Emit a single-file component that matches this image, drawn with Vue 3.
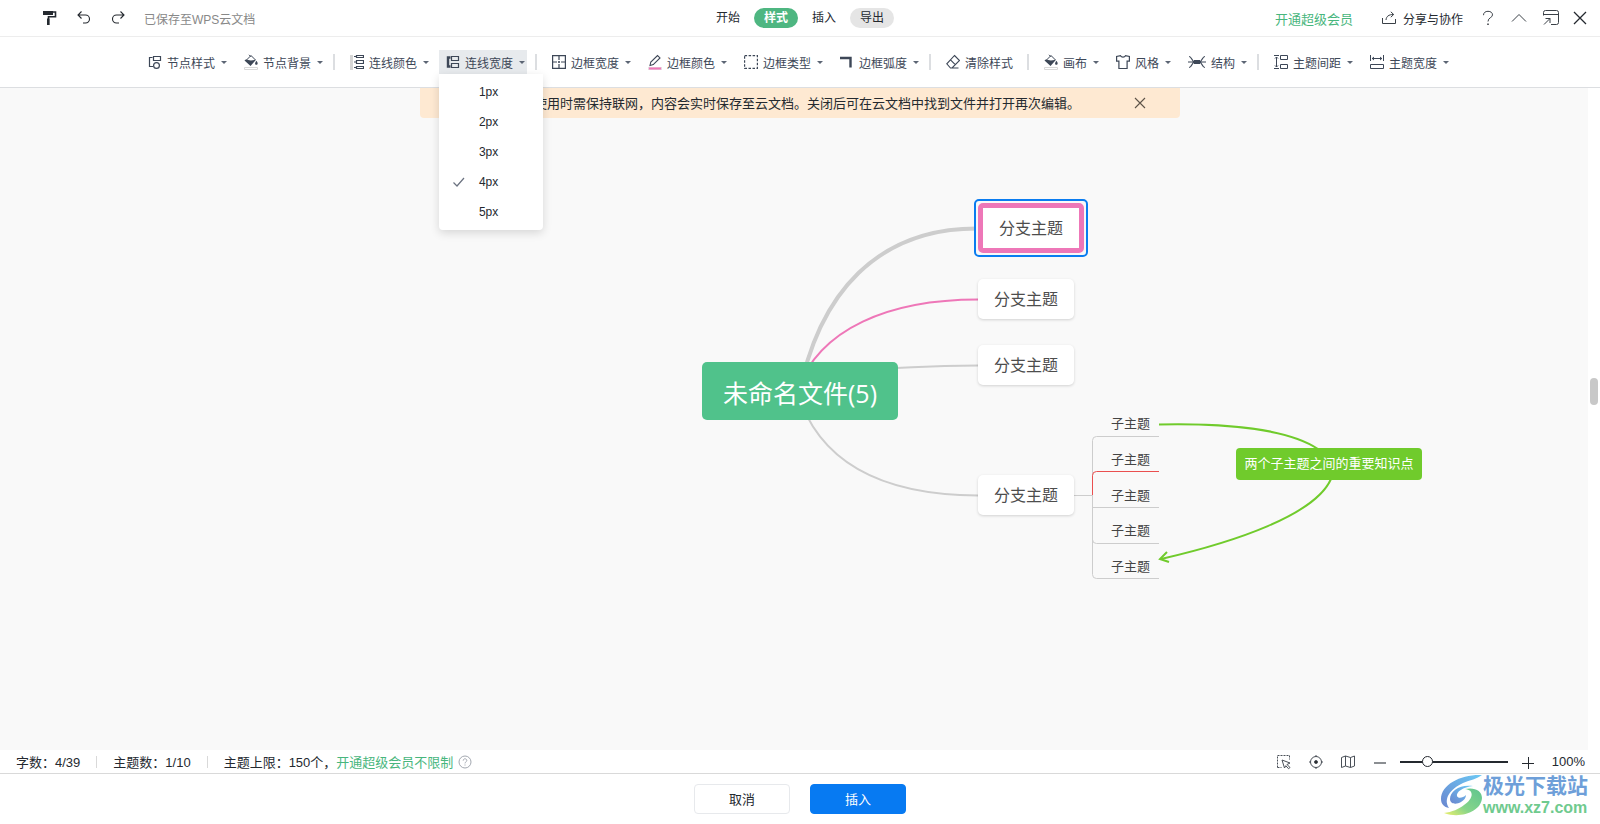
<script setup>
import { ref } from 'vue'

const tabs = [
  { label: '开始', kind: '' },
  { label: '样式', kind: 'active' },
  { label: '插入', kind: '' },
  { label: '导出', kind: 'muted' },
]

const tools = [
  { label: '节点样式', icon: 'nodeStyle', caret: true },
  { label: '节点背景', icon: 'bucket', caret: true },
  { sep: true },
  { label: '连线颜色', icon: 'lineColor', caret: true },
  { label: '连线宽度', icon: 'lineWidth', caret: true, open: true },
  { sep: true },
  { label: '边框宽度', icon: 'borderWidth', caret: true },
  { label: '边框颜色', icon: 'pen', caret: true },
  { label: '边框类型', icon: 'dashed', caret: true },
  { label: '边框弧度', icon: 'corner', caret: true },
  { sep: true },
  { label: '清除样式', icon: 'eraser' },
  { sep: true },
  { label: '画布', icon: 'bucket', caret: true },
  { label: '风格', icon: 'shirt', caret: true },
  { label: '结构', icon: 'structure', caret: true, wide: true },
  { sep: true },
  { label: '主题间距', icon: 'spacing', caret: true },
  { label: '主题宽度', icon: 'topicWidth', caret: true },
]

const widths = ['1px', '2px', '3px', '4px', '5px']
const chosen = ref('4px')
const zoomLevel = ref(23)

const branches = [
  { x: 828, y: 191 },
  { x: 828, y: 257 },
  { x: 828, y: 387 },
]
const leaves = [324, 360, 396, 431, 467]
</script>

<template>
  <div class="app">
    <header class="topbar">
      <div class="top-left">
        <button class="icon-btn" aria-label="格式刷">
          <svg width="16" height="16" viewBox="0 0 16 16"><path d="M1 1h10v4H1z" fill="#24292f" /><path d="M11 2h2.5v4.8H6.5V15" fill="none" stroke="#24292f" stroke-width="1.6" /><path d="M5 8.500h2.500V15H5z" fill="#24292f" /></svg>
        </button>
        <button class="icon-btn" aria-label="撤销">
          <svg width="16" height="16" viewBox="0 0 16 16" class="ln"><path d="M5.500 1.500 2 5l3.500 3.500M2 5h7.500a4 4 0 0 1 0 8H7" /></svg>
        </button>
        <button class="icon-btn" aria-label="重做">
          <svg width="16" height="16" viewBox="0 0 16 16" class="ln"><path d="M10.500 1.500 14 5l-3.500 3.500M14 5H6.500a4 4 0 0 0 0 8H9" /></svg>
        </button>
        <span class="saved">已保存至WPS云文档</span>
      </div>
      <nav class="tabs">
        <button v-for="t in tabs" :key="t.label" class="tab" :class="t.kind">{{ t.label }}</button>
      </nav>
      <div class="top-right">
        <a href="#" class="vip">开通超级会员</a>
        <button class="share">
          <svg width="16" height="16" viewBox="0 0 16 16" class="ln thin"><path d="M1.500 8v5.500h13V9M5 10c.3-3.500 2.500-5.500 7.500-5.500M9.800 1.800l2.900 2.700-2.900 2.700" /></svg>
          <span>分享与协作</span>
        </button>
        <button class="icon-btn" aria-label="帮助">
          <svg width="16" height="16" viewBox="0 0 16 16" class="ln thin"><path d="M3.500 5.200C3.500 2.700 5.300 1.300 8 1.300s4.500 1.400 4.500 3.600C12.500 7.800 8 7.500 8 11.500" /><path d="M7.300 13.500h1.400V15H7.300z" fill="#24292f" stroke="none" /></svg>
        </button>
        <button class="icon-btn" aria-label="收起">
          <svg width="16" height="16" viewBox="0 0 16 16" class="ln thin"><path d="M1 11.500 8 4.500l7 7" /></svg>
        </button>
        <button class="icon-btn" aria-label="窗口">
          <svg width="18" height="18" viewBox="0 0 18 18" class="ln thin"><path d="M1.500 6.500v-3a2 2 0 0 1 2-2h11a2 2 0 0 1 2 2v10a2 2 0 0 1-2 2H9M1.500 5.500h15M2 15.500l6-6M3.500 9.500H8V14" /></svg>
        </button>
        <button class="icon-btn close" aria-label="关闭">
          <svg width="16" height="16" viewBox="0 0 16 16" class="ln"><path d="m2 2 12 12M14 2 2 14" stroke-width="1.300" /></svg>
        </button>
      </div>
    </header>

    <div class="toolbar" role="toolbar">
      <template v-for="(t, i) in tools" :key="i">
        <i v-if="t.sep" class="sep"></i>
        <div v-else class="tool-wrap">
          <button class="tool" :class="{ open: t.open, plain: !t.caret }">
            <svg class="tool-icon" height="16" :width="t.wide ? 18 : 14" :viewBox="t.wide ? '0 0 18 16' : '0 0 14 16'">
              <g v-if="t.icon === 'nodeStyle'"><path d="M5.500 2.500h7v4h-7zM4.500 3.500H1.500v9h3.500" /><circle cx="8.500" cy="11.500" r="2.900" /></g>
              <g v-else-if="t.icon === 'bucket'"><path d="M2.500 6 7 1.500 11.500 6M5 .8l2 2" stroke-width="1" /><path d="M.5 6.500C2 4.500 4 6.500 7 6.500l5-.8L6.500 12z" fill="#3d4757" stroke="none" /><path d="M12.300 6.800c2.200 2.700 1.400 4 0 4s-1.800-1.300 0-4z" fill="#3d4757" stroke="none" /><path d="M.5 13.500h13v2H.5z" stroke="#d8d8d8" fill="#fff" stroke-width="1" /></g>
              <g v-else-if="t.icon === 'lineColor'"><path d="M0 1h3v15H0z" fill="#d6d6d6" stroke="none" /><path d="M6.500 1.500h7v2h-7zM6.500 6.500h7v3h-7zM6.500 12.500h7v2h-7zM4 2.500h2M4 8h2M4 13.500h2" /></g>
              <g v-else-if="t.icon === 'lineWidth'"><path d="M4.500 3.500H2v9h2.500" stroke-width="2.400" /><path d="M5.500 2.500h7v4h-7zM5.500 9.500h7v4h-7z" /></g>
              <g v-else-if="t.icon === 'borderWidth'"><path d="M.6 1.600h12.800v12.800H.6z" /><path d="M7 2v4M7 10v4M1 8h4M9 8h4M7 7v2M6 8h2" /></g>
              <g v-else-if="t.icon === 'pen'"><path d="M2 11.500 2.800 8 9.500 1.500l2.500 2.400-6.700 6.700z" stroke-width="1.100" /><path d="M0 13h14v3H0z" fill="#e6dbe1" stroke="none" /><path d="M1 13.500h12v2H1z" fill="#ef77b8" stroke="none" /></g>
              <g v-else-if="t.icon === 'dashed'"><path d="M.6 1.600h12.800v12.800H.6z" stroke-dasharray="2.500 1.500" /></g>
              <g v-else-if="t.icon === 'corner'"><path d="M0 4h10.500v9.500" stroke-width="2.400" /></g>
              <g v-else-if="t.icon === 'eraser'"><path d="m8.500 1.500 5 5-7.500 7.500H4.500L.8 9.800zM4.500 5.800l5 5M6 14h6.500" stroke-width="1.100" /></g>
              <g v-else-if="t.icon === 'shirt'"><path d="M4.500 1.700c1 1.800 4 1.800 5 0l3.900.8v4.700h-2.300v7.300H2.900V7.200H.6V2.500z" /></g>
              <g v-else-if="t.icon === 'structure'"><path d="M1 2.500c3 0 2.500 5.500 6 5.500M1 13.500C4 13.500 3.500 8 7 8M17 2.500c-3 0-2.500 5.500-6 5.500M17 13.500c-3 0-2.500-5.500-6-5.500M0 8h18" /><path d="M6 6h6v4H6z" fill="#3d4757" stroke="none" /></g>
              <g v-else-if="t.icon === 'spacing'"><path d="M6.500 1.500h7v4h-7zM6.500 10.500h7v4h-7zM0 1.500h5M0 14.500h5M2.500 3v10M1 4.500l1.500-1.500L4 4.500M1 11.500 2.500 13 4 11.500" stroke-width="1" /></g>
              <g v-else><path d="M.5 10.500h13v4H.5zM.5 1v6M13.500 1v6M2 4.500h10M4 3 2.200 4.500 4 6M10 3l1.800 1.500L10 6" stroke-width="1" /></g>
            </svg>
            <span>{{ t.label }}</span>
            <i v-if="t.caret" class="caret"></i>
          </button>
          <ul v-if="t.open" class="menu">
            <li v-for="w in widths" :key="w">
              <button class="menu-item" @click="chosen = w">
                <svg width="14" height="12" viewBox="0 0 14 12"><path v-if="w === chosen" d="m1.500 6.500 3.500 3.500 7-8" fill="none" stroke="#6b7280" stroke-width="1.200" /></svg>
                <span>{{ w }}</span>
              </button>
            </li>
          </ul>
        </div>
      </template>
    </div>

    <main class="canvas">
      <div class="notice">
        <span>使用时需保持联网，内容会实时保存至云文档。关闭后可在云文档中找到文件并打开再次编辑。</span>
        <button class="icon-btn" aria-label="关闭提示">
          <svg width="12" height="12" viewBox="0 0 12 12"><path d="m1 1 10 10M11 1 1 11" fill="none" stroke="#5d5348" stroke-width="1.100" /></svg>
        </button>
      </div>

      <div class="stage">
        <svg class="links" width="1300" height="662" viewBox="150 88 1300 662" fill="none">
          <path d="M798 400C818 290 880 228 978 228.500" stroke="#cdcdcd" stroke-width="4" />
          <path d="M797 391C819 328 890 299.500 978 299.500" stroke="#ee77b8" stroke-width="2" />
          <path d="M850 371Q910 366 978 365.500" stroke="#cdcdcd" stroke-width="2" />
          <path d="M797 391C817 458 876 495 978 495.500" stroke="#cdcdcd" stroke-width="2" />
          <g stroke="#cdcdcd">
            <path d="M1074 495.500h18.500" />
            <path d="M1159 436.500h-62.500a4 4 0 0 0-4 4V574.500a4 4 0 0 0 4 4H1159" />
            <path d="M1092.500 507.500H1159M1092.500 539.500a4 4 0 0 0 4 4H1159" />
          </g>
          <path d="M1092.500 495v-19.500a4 4 0 0 1 4-4H1159" stroke="#ea4f4f" />
          <g stroke="#70cb2c" stroke-width="2">
            <path d="M1159 424.500C1230 423 1290 430 1318 449" />
            <path d="M1331 479C1315 515 1235 542 1161 559" />
            <path d="m1167 552-7 7 9 3" />
          </g>
        </svg>
        <div class="root-node">未命名文件(5)</div>
        <div class="picked"><div class="picked-inner">分支主题</div></div>
        <div v-for="b in branches" :key="b.y" class="branch" :style="{ left: b.x + 'px', top: b.y + 'px' }">分支主题</div>
        <div v-for="y in leaves" :key="y" class="leaf" :style="{ top: y + 'px' }">子主题</div>
        <div class="relation">两个子主题之间的重要知识点</div>
      </div>
      <div class="scroll-lane"><i class="thumb"></i></div>
    </main>

    <div class="status">
      <div class="counts">
        <span class="count">字数：4/39</span>
        <span class="count">主题数：1/10</span>
        <span class="count">主题上限：150个，<a href="#">开通超级会员不限制</a></span>
        <svg width="14" height="14" viewBox="0 0 14 14" fill="none" stroke="#a3a8b0"><circle cx="7" cy="7" r="6" /><path d="M5.200 5.600c0-2.400 3.600-2.400 3.600-.1 0 1.400-1.800 1.300-1.800 2.900M7 9.500v1" /></svg>
      </div>
      <div class="view-tools">
        <button class="icon-btn" aria-label="框选">
          <svg width="16" height="16" viewBox="0 0 16 16" fill="none" stroke="#4a5058"><path d="M1.500 13.500v-12h12v4M1.500 13.500h4" stroke-dasharray="2 1" /><path d="m6 6 8 3-3 1.500 3 3-1.500 1.200-2.700-3L8.500 14z" /></svg>
        </button>
        <button class="icon-btn" aria-label="定位">
          <svg width="16" height="16" viewBox="0 0 16 16" fill="none" stroke="#4a5058"><circle cx="8" cy="8" r="5.500" /><circle cx="8" cy="8" r="1.500" fill="#222" /><path d="M8 1v2M8 13v2M1 8h2M13 8h2" /></svg>
        </button>
        <button class="icon-btn" aria-label="导航">
          <svg width="16" height="16" viewBox="0 0 16 16" fill="none" stroke="#4a5058"><path d="M1.500 3.500 5.500 2v10l-4 1.500zM5.500 2l5 1.500v10l-5-1.500M10.500 3.500l4-1.500v10l-4 1.500" /></svg>
        </button>
        <button class="icon-btn" aria-label="缩小">
          <svg width="16" height="16" viewBox="0 0 16 16"><path d="M2 9h12" stroke="#8b8e92" stroke-width="2" /></svg>
        </button>
        <input v-model="zoomLevel" class="zoom" type="range" min="0" max="100" aria-label="缩放" />
        <button class="icon-btn" aria-label="放大">
          <svg width="16" height="16" viewBox="0 0 16 16"><path d="M2 9.500h12M8.500 3v12" stroke="#24292f" stroke-width="1" /></svg>
        </button>
        <span class="percent">100%</span>
      </div>
    </div>

    <footer class="footer">
      <button class="btn">取消</button>
      <button class="btn primary">插入</button>
      <div class="brand">
        <svg width="42" height="42" viewBox="0 0 42 42">
          <defs>
            <linearGradient id="blue" x1="0" y1="1" x2="1" y2="0"><stop offset="0" stop-color="#6a86cf" /><stop offset="1" stop-color="#6cc9f5" /></linearGradient>
            <linearGradient id="green" x1="0" y1="1" x2="1" y2="0"><stop offset="0" stop-color="#eef06a" /><stop offset=".4" stop-color="#86d58a" /><stop offset="1" stop-color="#5fc48f" /></linearGradient>
          </defs>
          <path d="M42 1C22 0 1 10 1 25c0 5 3 8 8 9C3 25 10 15 23 9c7-3 14-4 19-8z" fill="url(#blue)" />
          <path d="M33 12C20 10 10 17 10 25c0 5 6 6 11 3 3-2 5-4 5-7-3 3-8 4-9 1-1-4 6-9 16-10z" fill="url(#blue)" />
          <path d="M25 15c10 1 8 10-1 16-5 4-12 7-20 8 16 6 37-1 38-15 0-7-7-11-17-9z" fill="url(#green)" />
        </svg>
        <div class="brand-text">
          <span class="brand-name">极光下载站</span>
          <span class="brand-url">www.xz7.com</span>
        </div>
      </div>
    </footer>
  </div>
</template>

<style>
body {
  margin: 0;
}
</style>

<style scoped>
.app {
  display: flex;
  flex-direction: column;
  height: 100vh;
  overflow: hidden;
  background: #fff;
  color: #24292f;
  font-family: "Liberation Sans", "Noto Sans CJK SC", sans-serif;
  font-size: 12px;
}
button {
  margin: 0;
  padding: 0;
  border: 0;
  background: none;
  color: inherit;
  font: inherit;
  white-space: nowrap;
}
a {
  color: #48b67d;
  text-decoration: none;
}
svg {
  display: block;
  flex: none;
}
.ln {
  fill: none;
  stroke: #24292f;
  stroke-width: 1.1;
}
.ln.thin {
  stroke: #3a4047;
  stroke-width: 1;
}
.icon-btn {
  display: flex;
  align-items: center;
  justify-content: center;
}
.topbar {
  display: grid;
  grid-template-columns: 1fr auto 1fr;
  align-items: center;
  height: 36px;
  border-bottom: 1px solid #ededed;
}
.top-left {
  display: flex;
  align-items: center;
  gap: 18px;
  padding-left: 42px;
}
.saved {
  color: #888;
}
.tabs {
  display: flex;
  gap: 4px;
}
.tab {
  width: 44px;
  height: 20px;
  border-radius: 10px;
  line-height: 20px;
}
.tab.active {
  background: #4eb681;
  color: #fff;
  font-weight: bold;
}
.tab.muted {
  background: #e5e5e5;
}
.top-right {
  display: flex;
  align-items: center;
  justify-content: flex-end;
  gap: 15px;
  padding-right: 12px;
}
.close {
  margin-left: -3px;
}
.vip {
  margin-right: 13px;
  font-size: 13px;
}
.share {
  display: flex;
  align-items: center;
  gap: 6px;
  margin-right: 2px;
}
.toolbar {
  position: relative;
  z-index: 2;
  display: flex;
  align-items: center;
  justify-content: center;
  height: 50px;
  padding-right: 8px;
  border-bottom: 1px solid #dcdee1;
  color: #3d4757;
}
.tool-wrap {
  position: relative;
  margin: 0 4px;
}
.tool {
  display: flex;
  align-items: center;
  height: 24px;
  padding: 0 2px 0 7px;
}
.tool.plain {
  padding: 0 6px 0 7px;
}
.tool.open {
  background: #e7eaed;
}
.tool-icon {
  margin-right: 5px;
  fill: none;
  stroke: #3d4757;
  stroke-width: 1.2;
}
.sep {
  width: 2px;
  height: 16px;
  margin: 0 4px;
  background: #dcdee1;
}
.caret {
  margin-left: 6px;
  border: 3px solid transparent;
  border-top-color: #5c6574;
  border-bottom-width: 0;
}
.menu {
  position: absolute;
  top: 24px;
  left: 0;
  width: 104px;
  margin: 0;
  padding: 3px 0;
  border-radius: 0 0 4px 4px;
  background: #fff;
  box-shadow: 0 3px 10px rgba(0, 0, 0, 0.14);
  list-style: none;
  color: #24292f;
}
.menu-item {
  display: flex;
  align-items: center;
  gap: 13px;
  width: 100%;
  height: 30px;
  padding-left: 13px;
}
.canvas {
  position: relative;
  display: flex;
  flex: 1;
  justify-content: center;
  min-height: 0;
  overflow: hidden;
  background: #f9f9f9;
}
.notice {
  position: absolute;
  z-index: 1;
  top: 0;
  display: flex;
  align-items: center;
  justify-content: flex-end;
  gap: 54px;
  width: 760px;
  height: 30px;
  box-sizing: border-box;
  padding-right: 34px;
  border-radius: 0 0 4px 4px;
  background: #fee9d2;
  font-size: 13px;
}
.notice span {
  padding-bottom: 2px;
}
.stage {
  position: relative;
  flex: none;
  width: 1300px;
  height: 662px;
}
.root-node,
.picked,
.branch,
.leaf,
.relation {
  position: absolute;
  display: flex;
  align-items: center;
  justify-content: center;
  box-sizing: border-box;
  white-space: nowrap;
}
.root-node {
  left: 552px;
  top: 274px;
  width: 196px;
  height: 58px;
  padding-top: 2px;
  border-radius: 5px;
  background: #50c28b;
  color: #fff;
  font-family: "Open Sans", "Noto Sans CJK SC", sans-serif;
  font-size: 25px;
}
.picked {
  left: 824px;
  top: 111px;
  width: 114px;
  height: 58px;
  border: 2px solid #0a7cf0;
  border-radius: 5px;
  background: #f9f9f9;
}
.picked-inner {
  display: flex;
  align-items: center;
  justify-content: center;
  box-sizing: border-box;
  width: 106px;
  height: 50px;
  padding-bottom: 2px;
  border: 5px solid #ee77b8;
  border-radius: 5px;
  background: #fff;
  color: #4d4d4d;
  font-size: 16px;
}
.branch {
  width: 96px;
  height: 40px;
  padding-bottom: 2px;
  border-radius: 5px;
  background: #fff;
  box-shadow: 0 1px 3px rgba(0, 0, 0, 0.16);
  color: #4d4d4d;
  font-size: 16px;
}
.leaf {
  left: 961px;
  height: 24px;
  padding-bottom: 4px;
  color: #444;
  font-size: 13px;
}
.relation {
  left: 1086px;
  top: 360px;
  width: 186px;
  height: 32px;
  padding-bottom: 4px;
  border-radius: 4px;
  background: #70cb2c;
  color: #fff;
  font-size: 13px;
}
.scroll-lane {
  position: absolute;
  top: 0;
  right: 0;
  bottom: 0;
  display: flex;
  justify-content: center;
  width: 12px;
  background: #fff;
}
.thumb {
  width: 8px;
  height: 27px;
  margin-top: 290px;
  border-radius: 4px;
  background: #c8c8c8;
}
.status {
  display: flex;
  align-items: center;
  justify-content: space-between;
  height: 23px;
  padding: 0 15px 0 16px;
  border-bottom: 1px solid #d9d9d9;
  font-size: 13px;
}
.counts,
.view-tools {
  display: flex;
  align-items: center;
}
.count {
  display: flex;
  align-items: center;
  height: 12px;
}
.count + .count {
  margin-left: 16px;
  padding-left: 16px;
  border-left: 1px solid #d9d9d9;
}
.counts svg {
  margin-left: 5px;
}
.view-tools {
  gap: 16px;
}
.zoom {
  width: 108px;
  height: 12px;
  margin: 0 -4px;
  appearance: none;
  background: linear-gradient(#24292f, #24292f) center / 100% 2px no-repeat;
}
.zoom::-webkit-slider-thumb {
  appearance: none;
  width: 11px;
  height: 11px;
  border: 1px solid #24292f;
  border-radius: 50%;
  background: #fff;
}
.footer {
  position: relative;
  display: flex;
  align-items: center;
  justify-content: center;
  gap: 20px;
  height: 50px;
  font-size: 13px;
}
.btn {
  width: 96px;
  height: 30px;
  padding-bottom: 2px;
  border: 1px solid #e7e9ec;
  border-radius: 4px;
}
.btn.primary {
  border-color: #077af2;
  background: #077af2;
  color: #fff;
}
.brand {
  position: absolute;
  right: 12px;
  top: 0;
  display: flex;
  gap: 1px;
}
.brand-text {
  display: flex;
  flex-direction: column;
}
.brand-name {
  color: #6e9fd9;
  font-size: 21px;
  font-weight: bold;
  line-height: 24px;
}
.brand-url {
  color: #6fca8e;
  font-size: 16px;
  font-weight: bold;
  line-height: 20px;
}
</style>
